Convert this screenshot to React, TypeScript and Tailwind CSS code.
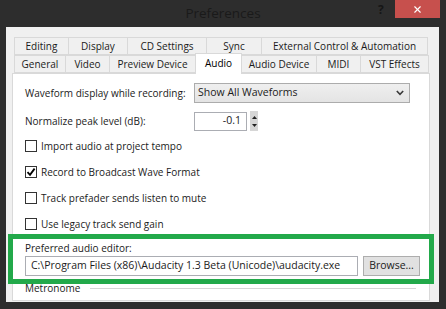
import { X } from 'lucide-react';

const row1 = [
  { label: 'Editing', w: 'w-[55px]' },
  { label: 'Display', w: 'w-[60px]' },
  { label: 'CD Settings', w: 'w-[80px]' },
  { label: 'Sync', w: 'w-[56px]' },
  { label: 'External Control & Automation', w: 'w-[167px]' },
];

const row2 = [
  { label: 'General', w: 'w-[52px]' },
  { label: 'Video', w: 'w-[45px]' },
  { label: 'Preview Device', w: 'w-[87px]' },
  { label: 'Audio', w: 'w-[47px]', active: true },
  { label: 'Audio Device', w: 'w-[76px]' },
  { label: 'MIDI', w: 'w-[45px]' },
  { label: 'VST Effects', w: 'w-[69px]' },
];

function Tab({ label, w, active }: { label: string; w: string; active?: boolean }) {
  if (active) {
    return (
      <div
        className={`${w} relative z-10 -mt-[2px] -ml-px flex h-[21px] items-start justify-center border border-b-0 border-[#d9d9d9] bg-white pt-[2px] text-[10px] leading-[14px] text-black`}
      >
        {label}
      </div>
    );
  }
  return (
    <div
      className={`${w} -ml-px flex h-[18px] items-center justify-center border border-[#d9d9d9] bg-[#f0f0f0] text-[10px] leading-[14px] text-[#1b1b1b] first:ml-0`}
    >
      {label}
    </div>
  );
}

function Checkbox({ label, checked }: { label: string; checked?: boolean }) {
  return (
    <div className="flex h-[26px] items-center gap-[4px] pl-[12px]">
      <div className="flex h-[12px] w-[12px] items-center justify-center border border-[#333] bg-white">
        {checked && (
          <svg width="10" height="10" viewBox="0 0 10 10">
            <path d="M1.5 5.2 L4 7.8 L8.6 1.6" fill="none" stroke="#000" strokeWidth="1.8" />
          </svg>
        )}
      </div>
      <span className="text-[10px] leading-[14px] text-[#1b1b1b]">{label}</span>
    </div>
  );
}

export default function App() {
  return (
    <div className="relative flex h-[309px] w-[446px] flex-col overflow-hidden bg-[#2d2d2d] font-['Open_Sans','Noto_Sans',sans-serif]">
      {/* title bar */}
      <div className="relative h-[27px] shrink-0">
        <div className="pt-[4px] text-center text-[13.5px] leading-[18px] text-[#1a1a1a]">Preferences</div>
        <div className="absolute left-[378px] top-[1px] text-[12px] font-bold text-[#161616]">?</div>
        <div className="absolute left-[395px] top-0 flex h-[18px] w-[45px] items-center justify-center bg-[#c7504d]">
          <X className="h-[11px] w-[11px] text-white" strokeWidth={2.5} />
        </div>
      </div>

      {/* window body */}
      <div className="ml-[6px] flex h-[275px] w-[433px] flex-col bg-[#f0f0f0] pt-[10px]">
        <div className="ml-[8px] flex">
          {row1.map((t) => (
            <Tab key={t.label} {...t} />
          ))}
        </div>
        <div className="ml-[8px] flex items-start">
          {row2.map((t) => (
            <Tab key={t.label} {...t} />
          ))}
        </div>

        {/* panel */}
        <div className="-mt-px ml-[6px] flex h-[228px] w-[418px] flex-col border border-[#d9d9d9] bg-white pt-[9px]">
          <div className="flex h-[20px] items-center">
            <span className="w-[181px] pl-[12px] text-[10px] text-[#1b1b1b]">Waveform display while recording:</span>
            <div className="flex h-[20px] w-[216px] items-center justify-between border border-[#acacac] bg-gradient-to-b from-[#efefef] to-[#e4e4e4] pl-[3px] pr-[5px]">
              <span className="text-[10.5px] text-[#1b1b1b]">Show All Waveforms</span>
              <svg width="8" height="6" viewBox="0 0 8 6">
                <path d="M0.8 1 L4 4.3 L7.2 1" fill="none" stroke="#3a3a3a" strokeWidth="1.6" />
              </svg>
            </div>
          </div>

          <div className="mt-[8px] flex h-[20px] items-center">
            <span className="w-[181px] pl-[12px] text-[10px] text-[#1b1b1b]">Normalize peak level (dB):</span>
            <div className="flex h-[19px] w-[53px] items-center justify-end border border-[#abadb3] bg-white pr-[5px] text-[10.5px] text-[#1b1b1b]">
              -0.1
            </div>
            <div className="ml-[3px] flex h-[20px] w-[8px] flex-col items-center justify-center gap-[5px] bg-[#d6d6d6]">
              <svg width="5" height="3" viewBox="0 0 5 3">
                <path d="M0 3 L2.5 0 L5 3 Z" fill="#222" />
              </svg>
              <svg width="5" height="3" viewBox="0 0 5 3">
                <path d="M0 0 L2.5 3 L5 0 Z" fill="#222" />
              </svg>
            </div>
          </div>

          <div className="mt-[2px]">
            <Checkbox label="Import audio at project tempo" />
            <Checkbox label="Record to Broadcast Wave Format" checked />
            <Checkbox label="Track prefader sends listen to mute" />
            <Checkbox label="Use legacy track send gain" />
          </div>

          <div className="mt-[3px] h-[16px] pl-[12px] text-[10px] leading-[16px] text-[#1b1b1b]">Preferred audio editor:</div>
          <div className="flex items-center">
            <div className="ml-[12px] flex h-[20px] w-[333px] items-center whitespace-nowrap border border-[#abadb3] bg-white pl-[5px] text-[10.5px] text-[#1b1b1b]">
              C:\Program Files (x86)\Audacity 1.3 Beta (Unicode)\audacity.exe
            </div>
            <div className="ml-[5px] flex h-[20px] w-[57px] items-center justify-center border border-[#adadad] bg-[#e1e1e1] text-[10.5px] text-[#1b1b1b]">
              Browse...
            </div>
          </div>

          <div className="mt-[5px] flex h-[14px] items-center pl-[12px]">
            <span className="text-[10px] leading-[14px] text-[#1b1b1b]">Metronome</span>
            <div className="ml-[10px] mr-[13px] h-px flex-1 bg-[#d5d5d5]" />
          </div>
        </div>
      </div>

      {/* highlight */}
      <div className="pointer-events-none absolute left-[8px] top-[234px] h-[50px] w-[426px] border-[5px] border-[#22a94a]" />
    </div>
  );
}
